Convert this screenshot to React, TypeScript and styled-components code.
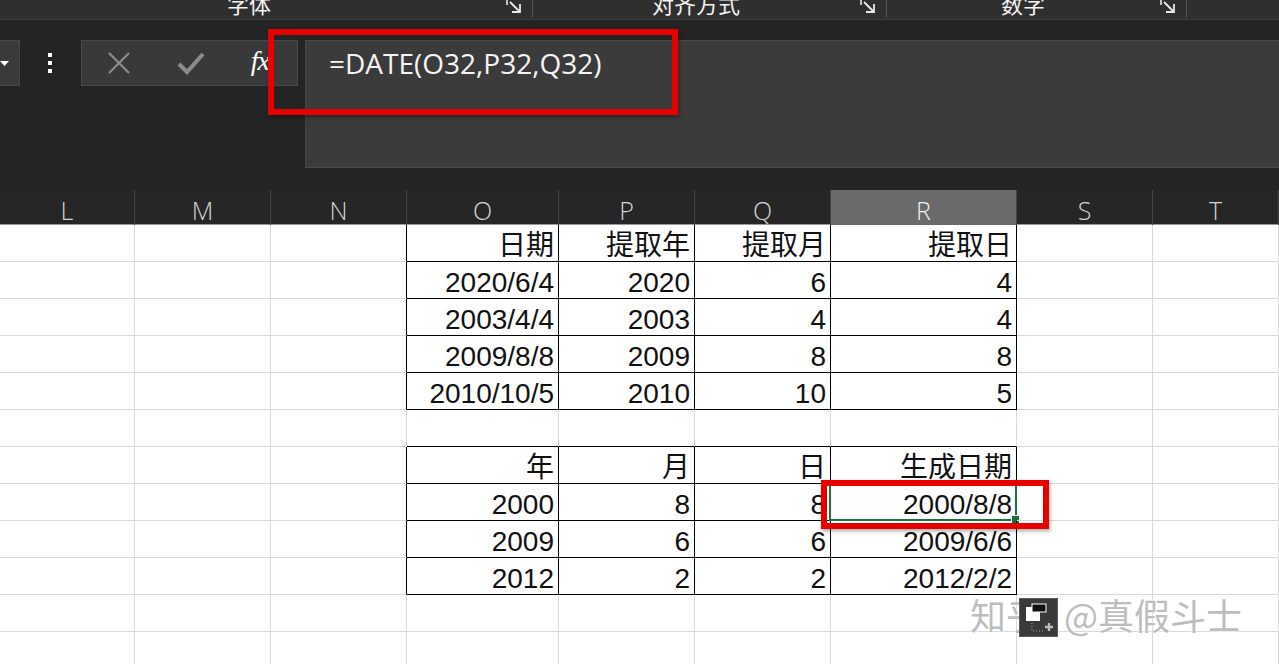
import React from "react";
import styled, { createGlobalStyle, css } from "styled-components";

const GlobalStyle = createGlobalStyle`
  html, body {
    margin: 0;
    padding: 0;
    background: #242424;
    overflow: hidden;
  }
  * {
    box-sizing: border-box;
  }
`;

const Page = styled.div`
  position: relative;
  width: 1279px;
  height: 664px;
  overflow: hidden;
  background: #242424;
  display: flex;
  flex-direction: column;
  font-family: "Liberation Sans", "Noto Sans CJK SC", sans-serif;

  & > * {
    flex-shrink: 0;
  }
`;

/* ---------- ribbon ---------- */

const Ribbon = styled.div`
  height: 20px;
  display: flex;
  background: #2f2f2f;
  border-bottom: 1px solid #3c3c3c;
  overflow: hidden;
`;

const RibbonGroup = styled.div<{ $w: number; $first?: boolean }>`
  flex: 0 0 ${(p) => p.$w}px;
  margin-left: ${(p) => (p.$first ? -7 : 0)}px;
  display: flex;
  align-items: flex-start;
  border-right: 1px solid #555555;
  height: 18px;
`;

const GroupLabel = styled.div`
  flex: 1;
  text-align: center;
  margin-top: -12px;
  color: #f2f2f2;
  font-family: "Noto Sans CJK SC", sans-serif;
  font-size: 22px;
  line-height: 30px;
`;

const LauncherIcon = styled.svg`
  flex: 0 0 auto;
  margin-top: -3px;
  margin-right: 9px;
`;

/* ---------- formula row ---------- */

const FormulaRow = styled.div`
  margin-top: 20px;
  height: 128px;
  display: flex;
`;

const LeftTools = styled.div`
  flex: 0 0 305px;
  height: 46px;
  display: flex;
  align-items: stretch;
`;

const NameBox = styled.div`
  flex: 0 0 20px;
  background: #3a3a3a;
  border: 1px solid #474747;
  border-left: none;
  display: flex;
  align-items: center;
  padding-top: 2px;
`;

const Dots = styled.div`
  flex: 0 0 61px;
  display: flex;
  flex-direction: column;
  align-items: center;
  justify-content: center;
  gap: 4px;
  padding-right: 2px;

  span {
    width: 4px;
    height: 4px;
    background: #ffffff;
  }
`;

const BtnGroup = styled.div`
  flex: 0 0 217px;
  background: #393939;
  border: 1px solid #474747;
  display: flex;
  align-items: center;
  justify-content: space-between;
  padding: 0 28px 0 25px;
`;

const Fx = styled.span`
  color: #ffffff;
  font-family: "Liberation Serif", serif;
  font-style: italic;
  font-size: 28px;
  letter-spacing: -1px;
  margin-bottom: 4px;
`;

const FormulaInput = styled.div`
  flex: 1;
  background: #3b3b3b;
  border-top: 1px solid #4a4a4a;
  border-bottom: 1px solid #4c4c4c;
  border-left: 1px solid #454545;
  padding: 3px 0 0 23px;
  color: #f4f4f4;
  font-family: "Open Sans", sans-serif;
  font-size: 28px;
  line-height: 38px;
`;

/* ---------- column headers ---------- */

const COLS = [135, 136, 136, 152, 136, 136, 186, 136];
const template = `${COLS.map((w) => w + "px").join(" ")} 1fr`;

const HeaderRow = styled.div`
  margin-top: 22px;
  height: 35px;
  display: grid;
  grid-template-columns: ${template};
  background: #262626;
  border-bottom: 1px solid #9a9a9a;
`;

const ColHead = styled.div<{ $sel?: boolean }>`
  display: flex;
  align-items: center;
  justify-content: center;
  color: ${(p) => (p.$sel ? "#f0f0f0" : "#d4d4d4")};
  font-family: "Open Sans", sans-serif;
  font-weight: 300;
  font-size: 25px;
  border-right: 1px solid #444444;
  ${(p) =>
    p.$sel &&
    css`
      background: #6a6a6a;
      border-bottom: 3px solid #2c7a4b;
      padding-top: 3px;
    `}
`;

/* ---------- sheet ---------- */

const Sheet = styled.div`
  flex: 1 1 auto;
  overflow: hidden;
  display: grid;
  grid-template-columns: ${template};
  grid-auto-rows: 37px;
  background: #ffffff;
`;

const Cell = styled.div<{ $right: boolean; $bottom: boolean }>`
  position: relative;
  display: flex;
  align-items: flex-end;
  justify-content: flex-end;
  padding: 0 4px 0 0;
  border-right: 1px solid ${(p) => (p.$right ? "#000000" : "#d9d9d9")};
  border-bottom: 1px solid ${(p) => (p.$bottom ? "#000000" : "#d9d9d9")};
  color: #111111;
  font-size: 28px;
  line-height: 30px;
  white-space: nowrap;
`;

const SelectedFrame = styled.div`
  position: absolute;
  left: -2px;
  top: -2px;
  right: -1px;
  bottom: -1px;
  border: 2px solid #1f6f43;
  pointer-events: none;

  &::after {
    content: "";
    position: absolute;
    right: -5px;
    bottom: -5px;
    width: 7px;
    height: 7px;
    background: #1f6f43;
    border: 1px solid #ffffff;
  }
`;

/* ---------- overlays ---------- */

const RedBox = styled.div<{ $x: number; $y: number; $w: number; $h: number }>`
  position: absolute;
  left: ${(p) => p.$x}px;
  top: ${(p) => p.$y}px;
  width: ${(p) => p.$w}px;
  height: ${(p) => p.$h}px;
  border: 6px solid #e60000;
  box-shadow: 1px 2px 4px rgba(0, 0, 0, 0.35);
  pointer-events: none;
`;

const Watermark = styled.div`
  position: absolute;
  left: 970px;
  top: 588px;
  color: #bdbdbd;
  font-family: "Noto Sans CJK SC", sans-serif;
  font-size: 36px;
  word-spacing: 14px;
  text-shadow: 0 0 2px #ffffff, 0 0 2px #ffffff;
  white-space: nowrap;
`;

const PasteIcon = styled.div`
  position: absolute;
  left: 1019px;
  top: 598px;
  width: 39px;
  height: 39px;
  background: #3a3a3a;
  border: 1px solid #5a5a5a;
`;

const data: string[][] = [
  ["日期", "提取年", "提取月", "提取日"],
  ["2020/6/4", "2020", "6", "4"],
  ["2003/4/4", "2003", "4", "4"],
  ["2009/8/8", "2009", "8", "8"],
  ["2010/10/5", "2010", "10", "5"],
  [],
  ["年", "月", "日", "生成日期"],
  ["2000", "8", "8", "2000/8/8"],
  ["2009", "6", "6", "2009/6/6"],
  ["2012", "2", "2", "2012/2/2"],
  [],
  [],
];

const tableRows = new Set([0, 1, 2, 3, 4, 6, 7, 8, 9]);
const inTable = (r: number, c: number) => tableRows.has(r) && c >= 3 && c <= 6;

const letters = ["L", "M", "N", "O", "P", "Q", "R", "S", "T"];

function Launcher() {
  return (
    <LauncherIcon width="18" height="16" viewBox="0 0 18 16">
      <path d="M2 2h6M2 2v6" stroke="#e8e8e8" strokeWidth="1.6" fill="none" />
      <path d="M5 5l9 9M15 7v8h-8" stroke="#e8e8e8" strokeWidth="1.8" fill="none" />
    </LauncherIcon>
  );
}

function App() {
  const groups = [
    { w: 540, label: "字体" },
    { w: 354, label: "对齐方式" },
    { w: 300, label: "数字" },
  ];

  return (
    <Page>
      <GlobalStyle />

      <Ribbon>
        {groups.map((g, i) => (
          <RibbonGroup key={i} $w={g.w} $first={i === 0}>
            <GroupLabel>{g.label}</GroupLabel>
            <Launcher />
          </RibbonGroup>
        ))}
      </Ribbon>

      <FormulaRow>
        <LeftTools>
          <NameBox>
            <svg width="10" height="8" viewBox="0 0 10 8">
              <path d="M0 1h9l-4.5 5z" fill="#ffffff" />
            </svg>
          </NameBox>
          <Dots>
            <span />
            <span />
            <span />
          </Dots>
          <BtnGroup>
            <svg width="24" height="24" viewBox="0 0 24 24">
              <path d="M2 2l20 20M22 2L2 22" stroke="#8c8c8c" strokeWidth="2.2" />
            </svg>
            <svg width="28" height="24" viewBox="0 0 28 24">
              <path d="M2 13l8 8L26 3" stroke="#8c8c8c" strokeWidth="4" fill="none" />
            </svg>
            <Fx>fx</Fx>
          </BtnGroup>
        </LeftTools>
        <FormulaInput>=DATE(O32,P32,Q32)</FormulaInput>
      </FormulaRow>

      <HeaderRow>
        {letters.map((l) => (
          <ColHead key={l} $sel={l === "R"}>
            {l}
          </ColHead>
        ))}
      </HeaderRow>

      <Sheet>
        {data.map((row, r) =>
          letters.map((_, c) => {
            const text = c >= 3 && c <= 6 ? row[c - 3] ?? "" : "";
            return (
              <Cell
                key={`${r}-${c}`}
                $right={inTable(r, c) || inTable(r, c + 1)}
                $bottom={inTable(r, c) || inTable(r + 1, c)}
              >
                {text}
                {r === 7 && c === 6 && <SelectedFrame />}
              </Cell>
            );
          })
        )}
      </Sheet>

      <RedBox $x={268} $y={29} $w={410} $h={86} />
      <RedBox $x={821} $y={480} $w={228} $h={49} />

      <Watermark>知乎 @真假斗士</Watermark>
      <PasteIcon>
        <svg width="37" height="37" viewBox="0 0 37 37">
          <rect x="6" y="8" width="14" height="14" fill="#ffffff" />
          <rect x="12" y="5" width="14" height="8" fill="#111111" stroke="#ffffff" strokeWidth="1" />
          <path d="M12 24v8h12" stroke="#aaaaaa" strokeDasharray="1 2" fill="none" />
          <path d="M29 24v8M25 28h8" stroke="#bbbbbb" strokeWidth="2.4" />
        </svg>
      </PasteIcon>
    </Page>
  );
}

export default App;
